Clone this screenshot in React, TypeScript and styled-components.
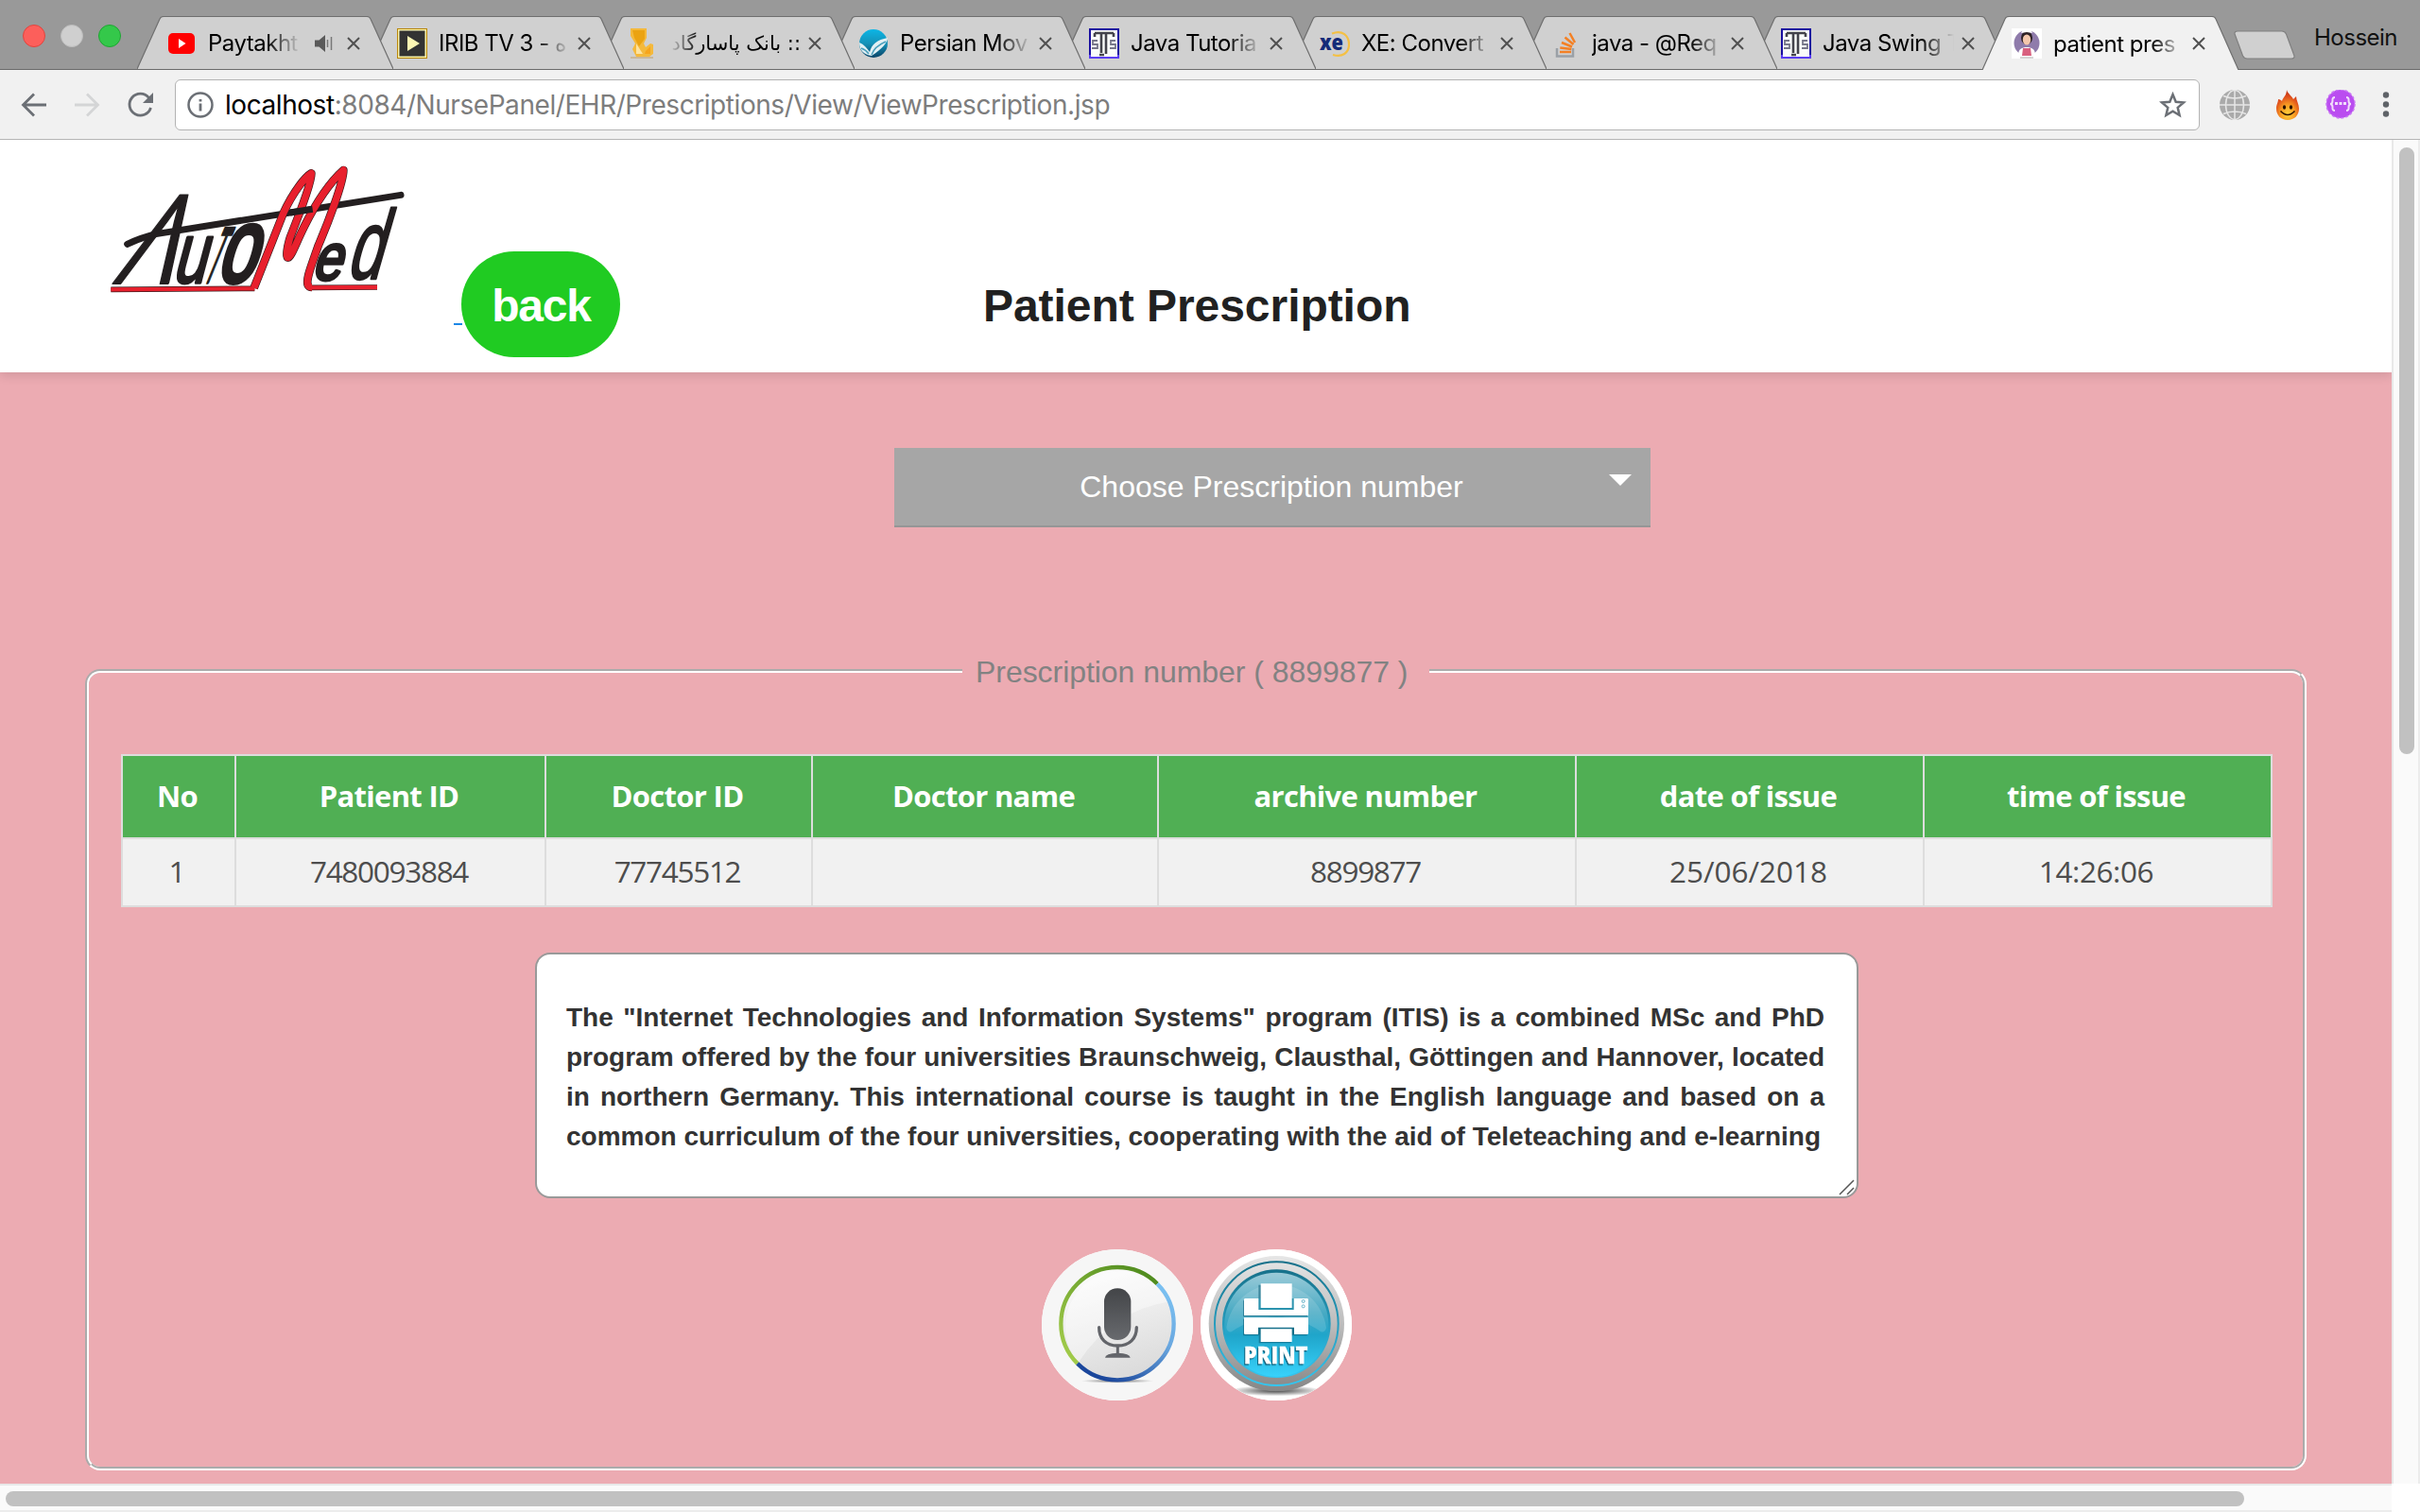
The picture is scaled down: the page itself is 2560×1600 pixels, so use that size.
import React from "react";
import styled, { createGlobalStyle, css } from "styled-components";

const sans = `"Liberation Sans", Arial, sans-serif`;
const ui = `Inter, Roboto, sans-serif`;

const GlobalStyle = createGlobalStyle`
  * { box-sizing: border-box; }
  body { margin: 0; background: #fff; overflow: hidden; }
`;

const Window = styled.div`
  width: 2560px;
  height: 1600px;
  display: flex;
  flex-direction: column;
  overflow: hidden;
`;

/* ---------- browser chrome ---------- */

const TabStrip = styled.div`
  height: 74px;
  display: flex;
  align-items: flex-end;
  background: #999;
  border-bottom: 1px solid #6a6a6a;
  flex: none;
`;

const Lights = styled.div`
  width: 145px;
  align-self: flex-start;
  padding: 26px 0 0 24px;
  display: flex;
  gap: 16px;
`;

const Light = styled.span<{ $color: string; $edge: string }>`
  width: 24px;
  height: 24px;
  border-radius: 50%;
  background: ${(p) => p.$color};
  border: 1px solid ${(p) => p.$edge};
`;

const Tab = styled.div<{ $order: number; $active?: boolean }>`
  position: relative;
  z-index: ${(p) => p.$order};
  width: 271px;
  height: ${(p) => (p.$active ? 57 : 56)}px;
  margin-right: -27px;
  margin-bottom: ${(p) => (p.$active ? -1 : 0)}px;
  padding: 1px 33px 0 31px;
  display: flex;
  align-items: center;
  flex: none;
`;

const TabShape = styled.svg`
  position: absolute;
  inset: 0;
  z-index: -1;
`;

const Favicon = styled.svg`
  width: 32px;
  height: 32px;
  margin-right: 12px;
  flex: none;
`;

const TabTitle = styled.span<{ $rtl?: boolean }>`
  flex: 1;
  min-width: 0;
  padding-top: 1px;
  overflow: hidden;
  white-space: nowrap;
  color: #000;
  font: 24px/40px ${ui};
  letter-spacing: -0.5px;
  mask-image: linear-gradient(to right, #000 calc(100% - 36px), transparent);
  ${(p) =>
    p.$rtl &&
    css`
      direction: rtl;
      font: 21px/40px "DejaVu Sans", sans-serif;
      letter-spacing: 0;
      mask-image: linear-gradient(to left, #000 calc(100% - 32px), transparent);
    `}
`;

const TabGlyph = styled.svg`
  width: 19px;
  height: 20px;
  margin: 0 7px 0 15px;
  flex: none;
`;

const CloseGlyph = styled.svg`
  width: 14px;
  height: 14px;
  margin-left: 8px;
  margin-right: 2px;
  flex: none;
`;

const NewTab = styled.svg`
  width: 68px;
  height: 33px;
  margin: 0 0 9px 20px;
  flex: none;
`;

const Profile = styled.span`
  margin-left: 19px;
  height: 73px;
  padding-top: 20px;
  font: 24px/40px ${ui};
  letter-spacing: -0.5px;
  color: #111;
`;

const Toolbar = styled.div`
  height: 74px;
  flex: none;
  display: flex;
  align-items: center;
  background: #f1f1f1;
  border-bottom: 1px solid #b5b5b5;
`;

const NavIcons = styled.div`
  width: 185px;
  padding-left: 22px;
  display: flex;
  gap: 28px;
`;

const NavIcon = styled.svg`
  width: 28px;
  height: 28px;
`;

const AddressBar = styled.div`
  width: 2142px;
  height: 54px;
  padding: 0 13px 0 12px;
  display: flex;
  align-items: center;
  background: #fff;
  border: 1.5px solid #b3b3b3;
  border-radius: 6px;
`;

const Url = styled.span`
  flex: 1;
  margin-left: 12px;
  padding-top: 1px;
  font: 28px/40px ${ui};
  letter-spacing: -0.44px;
  color: #7d7d7d;
`;

const Host = styled.span`
  color: #000;
`;

const Extensions = styled.div`
  display: flex;
  align-items: center;
  gap: 27px;
  padding-left: 21px;
`;

/* ---------- page ---------- */

const Viewport = styled.div`
  flex: 1;
  min-height: 0;
  display: grid;
  grid-template-columns: 2530px 30px;
  grid-template-rows: 1422px 30px;
`;

const Page = styled.div`
  background: #ecabb2;
  overflow: hidden;
`;

const Header = styled.header`
  height: 246px;
  padding-left: 100px;
  display: flex;
  align-items: flex-start;
  background: #fff;
  box-shadow: 0 4px 10px rgba(0, 0, 0, 0.11);
`;

const Logo = styled.svg`
  width: 340px;
  height: 170px;
  margin-top: 12px;
`;

const BackLink = styled.div`
  margin: 118px 0 0 40px;
  display: flex;
  align-items: flex-start;
`;

const LinkTail = styled.span`
  width: 9px;
  height: 2px;
  margin-top: 76px;
  background: #1b87e6;
`;

const BackButton = styled.button`
  width: 168px;
  height: 112px;
  margin-left: -1px;
  padding: 3px 0 0 1px;
  border: 0;
  border-radius: 56px;
  background: #20cb22;
  color: #fff;
  font: bold 48px/1 ${sans};
  letter-spacing: -1.2px;
`;

const Title = styled.h1`
  margin: 146px 0 0 384px;
  font: bold 48px/60px ${sans};
  letter-spacing: -0.05px;
  color: #212121;
`;

const Select = styled.div`
  width: 800px;
  height: 84px;
  margin: 80px 0 0 946px;
  padding-left: 58px;
  padding-right: 20px;
  display: flex;
  align-items: center;
  background: #a6a6a6;
  border-bottom: 2px solid #969696;
  color: #fff;
  font: 32px/40px ${sans};
`;

const SelectLabel = styled.span`
  flex: 1;
  padding-right: 16px;
  text-align: center;
`;

const Caret = styled.span`
  border: 12px solid transparent;
  border-top-color: #fff;
  border-bottom: 0;
  margin-bottom: 14px;
`;

const Panel = styled.fieldset`
  width: 2350px;
  height: 867px;
  margin: 131px 0 0 90px;
  padding: 67px 32px 0 34px;
  border: 4px groove #fff;
  border-radius: 16px;
`;

const Legend = styled.legend`
  width: 494px;
  margin-left: 890px;
  padding: 2px 0 0 14px;
  font: 32px/40px ${sans};
  letter-spacing: -0.05px;
  color: #828282;
  white-space: nowrap;
`;

const Table = styled.div`
  width: 2276px;
  display: grid;
  grid-template-columns: 118px 326px 280px 364px 440px 366px 366px;
  grid-template-rows: 86px 70px;
  gap: 2px;
  padding: 2px;
  background: #ddd;
`;

const HeadCell = styled.div`
  display: flex;
  align-items: center;
  justify-content: center;
  padding: 0 3px 2px 0;
  background: #50af54;
  color: #fff;
  font: bold 31px/40px "Open Sans", sans-serif;
  letter-spacing: -0.7px;
`;

const Cell = styled.div<{ $spacing: number }>`
  display: flex;
  align-items: center;
  justify-content: center;
  padding: 0 3px 2px 0;
  background: #f1f1f1;
  color: #4d4d4d;
  font: 31.5px/40px "Open Sans", sans-serif;
  letter-spacing: ${(p) => p.$spacing}px;
`;

const Note = styled.div`
  position: relative;
  width: 1400px;
  height: 260px;
  margin: 48px 0 0 438px;
  padding: 46px 34px 0 31px;
  background: #fff;
  border: 2px solid #999;
  border-radius: 16px;
  font: bold 28px/42px ${sans};
  color: #333;
`;

const NoteLine = styled.div<{ $width?: number }>`
  width: ${(p) => p.$width ?? 1331}px;
  white-space: nowrap;
  text-align: justify;
  text-align-last: justify;
`;

const Grip = styled.svg`
  position: absolute;
  right: 1px;
  bottom: 0;
  width: 18px;
  height: 18px;
`;

const Actions = styled.div`
  margin: 54px 0 0 974px;
  display: flex;
  gap: 8px;
`;

const RoundButton = styled.button`
  width: 160px;
  height: 160px;
  padding: 0;
  border: 0;
  border-radius: 50%;
  overflow: hidden;
  background: #fff;
  display: block;
`;

const VScroll = styled.div`
  background: #fafafa;
  border-left: 2px solid #e8e8e8;
  border-right: 2px solid #ececec;
  padding: 8px 0 0 6px;
`;

const HScroll = styled.div`
  background: #fafafa;
  border-top: 2px solid #e8e8e8;
  border-bottom: 2px solid #ececec;
  padding: 6px 0 0 6px;
`;

const Thumb = styled.div<{ $w: number; $h: number }>`
  width: ${(p) => p.$w}px;
  height: ${(p) => p.$h}px;
  border-radius: 8px;
  background: #c1c1c1;
`;

/* ---------- favicons ---------- */

const YouTube = () => (
  <Favicon viewBox="0 0 32 32">
    <rect x="2" y="5" width="28" height="22" rx="5" fill="#f00" />
    <path d="M13 11v10l7.5-5z" fill="#fff" />
  </Favicon>
);

const Irib = () => (
  <Favicon viewBox="0 0 32 32">
    <rect width="32" height="32" fill="#b8860b" />
    <rect x="1" y="1" width="30" height="30" fill="#fbf3a8" />
    <rect x="2.5" y="2.500" width="27" height="27" fill="#333" />
    <path d="M11 8v16l13-8z" fill="#fdf7b4" />
  </Favicon>
);

const Bank = () => (
  <Favicon viewBox="0 0 32 32">
    <path d="M3 0h17v10l-3 6 2 4 5-4 3 1v10l-4 3H9l-4-8 3-6-5-8z" fill="#f4b93c" />
    <path d="M5 2h13v9l-6 8-5-9z" fill="#eba312" />
    <path d="M9 16l7 11H9z" fill="#fde3a0" />
    <path d="M19 24l5-5v8h-6z" fill="#f7a51c" />
    <path d="M3 30h24v2H3z" fill="#c9b79a" />
  </Favicon>
);

const PersianMovie = () => (
  <Favicon viewBox="0 0 32 32">
    <defs>
      <linearGradient id="pm" x1="0" y1="0" x2="0" y2="1">
        <stop offset="0" stopColor="#0cb6e6" />
        <stop offset="0.5" stopColor="#1592b8" />
        <stop offset="1" stopColor="#0a4468" />
      </linearGradient>
    </defs>
    <circle cx="16" cy="16" r="15" fill="url(#pm)" />
    <path d="M1 15c5 2 8 6 11 10 2-8 8-13 19-15-1 6-5 11-17 19C6 28 1 23 1 15z" fill="#e2f0f4" />
    <path d="M3 21c3 1 6 3 8 6M14 28c2-6 8-11 15-14" stroke="#4a9fbc" strokeWidth="1.500" fill="none" />
  </Favicon>
);

const JavaTips = () => (
  <Favicon viewBox="0 0 32 32">
    <rect width="32" height="32" fill="#5a3df2" />
    <rect width="32" height="28" fill="#1a0fa0" />
    <rect x="2" y="2" width="28" height="28" fill="#fafcfa" />
    <path d="M6 5h20M6 5v4M26 5v4M13 5v21M18 5v22M11 28h5" stroke="#44444c" strokeWidth="2.600" fill="none" />
    <path d="M9 13H4v4h5v4H3M28 13h-5v4h5v4h-6" stroke="#77778a" strokeWidth="1.800" fill="none" />
  </Favicon>
);

const Xe = () => (
  <Favicon viewBox="0 0 32 32">
    <path d="M13 5.500C24 1 31 8 31 17S24 31 14 28" stroke="#f4c044" strokeWidth="2.200" fill="none" />
    <text x="0" y="23" fontFamily="Open Sans, sans-serif" fontWeight="800" fontSize="22" textLength="25" lengthAdjust="spacingAndGlyphs" fill="#142a78">
      xe
    </text>
  </Favicon>
);

const StackOverflow = () => (
  <Favicon viewBox="0 0 32 32">
    <path d="M7 21v8.500h17V21" stroke="#9aa0a6" strokeWidth="2.500" fill="none" />
    <path d="M10 25h12M10.300 20.500l12 1.500M12 15l11 4.500M15.500 9.500l9 7.500M20.500 5l5.500 10" stroke="#f48024" strokeWidth="2.500" />
  </Favicon>
);

const Nurse = () => (
  <Favicon viewBox="0 0 32 32">
    <rect width="32" height="32" fill="#fff" />
    <circle cx="16" cy="15.500" r="13.500" fill="#8f7bab" />
    <path d="M7 28c0-6 4-8 9-8s9 2 9 8l-4 2H11z" fill="#fff" />
    <path d="M12 21h8l1 8H11z" fill="#d9607f" />
    <ellipse cx="16" cy="10" rx="6" ry="7" fill="#2e2226" />
    <ellipse cx="16" cy="12" rx="4.200" ry="5.500" fill="#f4c7ac" />
    <path d="M10 5l2-4h8l2 4-6-1z" fill="#fff" />
    <path d="M9 31h14" stroke="#aaa" strokeWidth="1" />
  </Favicon>
);

const Close = () => (
  <CloseGlyph viewBox="0 0 14 14">
    <path d="M1 1l12 12M13 1L1 13" stroke="#505050" strokeWidth="2" />
  </CloseGlyph>
);

const Speaker = () => (
  <TabGlyph viewBox="0 0 19 20">
    <path d="M0 6.500h4.500L11 1v18L4.500 13.500H0z" fill="#5a5a5a" />
    <path d="M13.500 6v8M17.500 3v14" stroke="#777" strokeWidth="1.500" />
  </TabGlyph>
);

interface TabInfo {
  title: string;
  Icon: () => React.ReactElement;
  audio?: boolean;
  rtl?: boolean;
  active?: boolean;
}

const tabs: TabInfo[] = [
  { title: "Paytakht", Icon: YouTube, audio: true },
  { title: "IRIB TV 3 - ه", Icon: Irib },
  { title: ":: بانک پاسارگاد", Icon: Bank, rtl: true },
  { title: "Persian Mov", Icon: PersianMovie },
  { title: "Java Tutoria", Icon: JavaTips },
  { title: "XE: Convert", Icon: Xe },
  { title: "java - @Req", Icon: StackOverflow },
  { title: "Java Swing T", Icon: JavaTips },
  { title: "patient pres", Icon: Nurse, active: true },
];

const BrowserTab = ({ tab, order }: { tab: TabInfo; order: number }) => (
  <Tab $order={order} $active={tab.active}>
    <TabShape width="271" height={tab.active ? 57 : 56} viewBox={`0 0 271 ${tab.active ? 57 : 56}`}>
      <path
        d={tab.active ? "M0 57L24 3Q25 .5 28 .5H243Q246 .5 247 3L271 57" : "M0 56L24 3Q25 .5 28 .5H243Q246 .5 247 3L271 56"}
        fill={tab.active ? "#f1f1f1" : "#d0d0d0"}
        stroke="#6f6f6f"
        strokeWidth="1.200"
      />
    </TabShape>
    <tab.Icon />
    <TabTitle $rtl={tab.rtl}>{tab.title}</TabTitle>
    {tab.audio && <Speaker />}
    <Close />
  </Tab>
);

/* ---------- toolbar icons ---------- */

const Globe = () => (
  <svg width="32" height="32" viewBox="0 0 32 32">
    <circle cx="16" cy="16" r="16" fill="#aaa" />
    <g stroke="#e6e6e6" strokeWidth="1.500" fill="none">
      <path d="M16 0v32M0 16h32M4 6.500q12 5 24 0M4 25.500q12-5 24 0" />
      <ellipse cx="16" cy="16" rx="9.500" ry="15.500" />
    </g>
  </svg>
);

const Flame = () => (
  <svg width="26" height="32" viewBox="0 0 26 32">
    <defs>
      <radialGradient id="fl" cx="0.5" cy="0.8" r="0.7">
        <stop offset="0" stopColor="#ffd23c" />
        <stop offset="0.45" stopColor="#f79a22" />
        <stop offset="0.8" stopColor="#e0501c" />
        <stop offset="1" stopColor="#c93a18" />
      </radialGradient>
    </defs>
    <path d="M12 0c1 4 5 6 7 10l3-3c0 4 3 8 3 13 0 7-5 12-12 12S1 27 1 20c0-5 2-6 2-10 2 0 3 1 4 2C8 8 12 6 12 0z" fill="url(#fl)" />
    <ellipse cx="9.500" cy="18.500" rx="1.600" ry="2.200" fill="#2b1200" />
    <ellipse cx="16.500" cy="18.500" rx="1.600" ry="2.200" fill="#2b1200" />
    <path d="M5.500 22.500q7.500 8 15 0" stroke="#2b1200" strokeWidth="1.600" fill="none" />
  </svg>
);

const PurpleBadge = () => (
  <svg width="32" height="32" viewBox="0 0 32 32">
    <circle cx="16" cy="15" r="15" fill="#ba4df0" />
    <circle cx="16" cy="15" r="15" fill="none" stroke="#c977f4" strokeWidth="1.500" strokeDasharray="3 2" />
    <path d="M10 8q-3 0-2.500 3.500Q7.500 15 5 15q2.500 0 2.500 3.500Q7 22 10 22M22 8q3 0 2.500 3.500Q24.500 15 27 15q-2.500 0-2.500 3.500Q25 22 22 22" stroke="#f1ddfb" strokeWidth="2" fill="none" />
    <path d="M10 14.500h3M14.500 14.500h3M19 14.500h3" stroke="#f1ddfb" strokeWidth="3" />
  </svg>
);

const Menu = () => (
  <svg width="10" height="32" viewBox="0 0 10 32" fill="#5f6368">
    <circle cx="5" cy="5.500" r="3.200" />
    <circle cx="5" cy="15.500" r="3.200" />
    <circle cx="5" cy="25.500" r="3.200" />
  </svg>
);

/* ---------- page drawings ---------- */

interface LetterProps {
  ch: string;
  x: number;
  y: number;
  size: number;
  sx: number;
  skew: number;
  weight: number;
}

const Letter = ({ ch, x, y, size, sx, skew, weight }: LetterProps) => (
  <text
    transform={`translate(${x} ${y}) skewX(${-skew}) scale(${sx} 1)`}
    fontFamily="Liberation Sans, sans-serif"
    fontSize={size}
    fill="#231f20"
    stroke="#231f20"
    strokeWidth={weight}
    strokeLinejoin="round"
  >
    {ch}
  </text>
);

const peaks =
  "M506 434L600 195C630 130 668 82 688 70C690 95 650 200 622 270C610 305 607 338 614 338C625 335 640 290 665 240C700 170 745 100 790 60C790 100 740 230 710 300C688 365 670 405 677 425Q680 432 690 432";
const baseline = "M52 439L508 436M684 433L897 432";

const AutoMedLogo = () => (
  <Logo viewBox="0 0 1020 510" role="img" aria-label="AutoMed">
    <Letter ch="Λ" x={56} y={421} size={408} sx={0.66} skew={26} weight={6} />
    <Letter ch="u" x={244} y={416} size={272} sx={0.7} skew={15} weight={10} />
    <Letter ch="T" x={341} y={418} size={250} sx={0.24} skew={22} weight={11} />
    <Letter ch="o" x={384} y={413} size={330} sx={0.66} skew={17} weight={18} />
    <Letter ch="e" x={688} y={408} size={208} sx={0.8} skew={16} weight={11} />
    <Letter ch="d" x={796} y={406} size={312} sx={0.64} skew={16} weight={7} />
    <g fill="none" strokeLinejoin="round">
      <path d="M104 295Q145 275 195 263L972 139" stroke="#231f20" strokeWidth="21" strokeLinecap="round" />
      <path d={peaks} stroke="#3a1a1c" strokeWidth="26" />
      <path d={baseline} stroke="#3a1a1c" strokeWidth="17" />
      <path d={peaks} stroke="#e8202d" strokeWidth="22" />
      <path d={baseline} stroke="#e8202d" strokeWidth="13" />
      <path d="M621 195L692 184" stroke="#231f20" strokeWidth="21" />
    </g>
  </Logo>
);

const MicArt = () => (
  <svg width="160" height="160" viewBox="66 66 480 480">
    <defs>
      <linearGradient id="disc" x1="0.3" y1="0" x2="0.6" y2="1">
        <stop offset="0" stopColor="#fcfcfc" />
        <stop offset="1" stopColor="#dadada" />
      </linearGradient>
      <linearGradient id="green" x1="0" y1="1" x2="1" y2="0">
        <stop offset="0" stopColor="#a8d04e" />
        <stop offset="1" stopColor="#48861a" />
      </linearGradient>
      <linearGradient id="blue" x1="0.9" y1="0" x2="0.3" y2="1">
        <stop offset="0" stopColor="#7cc2f2" />
        <stop offset="0.45" stopColor="#6aa8e0" />
        <stop offset="1" stopColor="#1b479c" />
      </linearGradient>
      <linearGradient id="body" x1="0" y1="0" x2="0" y2="1">
        <stop offset="0" stopColor="#434548" />
        <stop offset="1" stopColor="#686a6e" />
      </linearGradient>
      <radialGradient id="shade">
        <stop offset="0" stopColor="#777" />
        <stop offset="1" stopColor="#f6f6f6" />
      </radialGradient>
    </defs>
    <rect x="66" y="66" width="480" height="480" fill="#f6f6f6" />
    <ellipse cx="306" cy="484" rx="115" ry="7" fill="url(#shade)" />
    <circle cx="306" cy="302" r="176" fill="url(#disc)" />
    <path d="M182 426Q290 260 473 232A176 176 0 1 0 182 426" fill="#fff" opacity="0.4" />
    <path d="M179.400 428.600A179 179 0 0 1 432.600 175.400" stroke="url(#green)" strokeWidth="13" fill="none" />
    <path d="M432.600 175.400A179 179 0 0 1 179.400 428.600" stroke="url(#blue)" strokeWidth="13" fill="none" />
    <rect x="264" y="190" width="85" height="164" rx="42" fill="url(#body)" />
    <path d="M248 314C248 350 270 372 307 372S367 350 367 314" stroke="#63656a" strokeWidth="10" strokeLinecap="round" fill="none" />
    <path d="M307 372V400" stroke="#63656a" strokeWidth="9" />
    <path d="M267 410Q268 396 307 395Q346 396 347 410z" fill="#63656a" />
  </svg>
);

const PrintArt = () => (
  <svg width="160" height="160" viewBox="570 66 480 480">
    <defs>
      <linearGradient id="steel" x1="0" y1="0" x2="0" y2="1">
        <stop offset="0" stopColor="#e6e6e6" />
        <stop offset="0.5" stopColor="#bdbdbd" />
        <stop offset="1" stopColor="#868686" />
      </linearGradient>
      <linearGradient id="teal" x1="0" y1="0" x2="0" y2="1">
        <stop offset="0" stopColor="#17718a" />
        <stop offset="1" stopColor="#33c6f0" />
      </linearGradient>
      <linearGradient id="glass" x1="0" y1="0" x2="0" y2="1">
        <stop offset="0" stopColor="#9ccbd8" />
        <stop offset="0.4" stopColor="#45a9c3" />
        <stop offset="0.6" stopColor="#1fa5ca" />
        <stop offset="1" stopColor="#38d2fb" />
      </linearGradient>
      <radialGradient id="floor">
        <stop offset="0" stopColor="#444" />
        <stop offset="1" stopColor="#fff" />
      </radialGradient>
    </defs>
    <rect x="570" y="66" width="480" height="480" fill="#fff" />
    <ellipse cx="810" cy="515" rx="150" ry="17" fill="url(#floor)" />
    <circle cx="811" cy="302" r="215" fill="url(#steel)" />
    <circle cx="811" cy="302" r="196" fill="none" stroke="url(#teal)" strokeWidth="6" />
    <circle cx="811" cy="302" r="172" fill="url(#teal)" />
    <circle cx="811" cy="305" r="165" fill="url(#glass)" />
    <path d="M652 315Q655 330 668 328Q740 280 811 280T952 328Q966 330 969 315A160 160 0 0 0 652 315" fill="#fff" opacity="0.14" />
    <g fill="#0d5f7a" opacity="0.6" transform="translate(-3 4)">
      <path d="M757 175h103v80H757zM712 222h200v54H708v-50zM708 283h204v49q0 4-4 4H708zM758 318h102v42H758z" />
    </g>
    <path d="M712 222h196q4 0 4 4v50H708v-50q0-4 4-4zM708 283h204v49q0 4-4 4H712q-4 0-4-4z" fill="#fff" />
    <path d="M754 222h112v36H754z" fill="#2b93ae" />
    <path d="M761 175h99v77h-99z" fill="#fff" />
    <path d="M753 314h114v22H753z" fill="#16708a" />
    <path d="M761 319h99v41h-99z" fill="#fff" />
    <circle cx="896" cy="231" r="4.500" fill="none" stroke="#4aa6bf" strokeWidth="2.500" />
    <circle cx="896" cy="247" r="4.500" fill="none" stroke="#4aa6bf" strokeWidth="2.500" />
    <text
      x="707"
      y="428"
      textLength="204"
      lengthAdjust="spacingAndGlyphs"
      fontFamily="Open Sans, sans-serif"
      fontWeight="800"
      fontSize="72"
      fill="#fff"
      stroke="#fff"
      strokeWidth="1"
      filter="drop-shadow(-3px 4px 1px #0d5f7a)"
    >
      PRINT
    </text>
  </svg>
);

const columns = [
  { head: "No", value: "1", spacing: 0 },
  { head: "Patient ID", value: "7480093884", spacing: -1.3 },
  { head: "Doctor ID", value: "77745512", spacing: -1.3 },
  { head: "Doctor name", value: "", spacing: 0 },
  { head: "archive number", value: "8899877", spacing: -1.3 },
  { head: "date of issue", value: "25/06/2018", spacing: 0 },
  { head: "time of issue", value: "14:26:06", spacing: -0.4 },
];

const noteLines = [
  'The "Internet Technologies and Information Systems" program (ITIS) is a combined MSc and PhD',
  "program offered by the four universities Braunschweig, Clausthal, Göttingen and Hannover, located",
  "in northern Germany. This international course is taught in the English language and based on a",
  "common curriculum of the four universities, cooperating with the aid of Teleteaching and e-learning",
];

export default function App() {
  return (
    <Window>
      <GlobalStyle />
      <TabStrip>
        <Lights>
          <Light $color="#fc5f5b" $edge="#e0443e" />
          <Light $color="#cfcfcf" $edge="#bdbdbd" />
          <Light $color="#34c84a" $edge="#1fa533" />
        </Lights>
        {tabs.map((tab, i) => (
          <BrowserTab key={i} tab={tab} order={tab.active ? 20 : 10 - i} />
        ))}
        <NewTab viewBox="0 0 68 33">
          <path d="M6 2H53Q56 2 57.500 5L66 28Q66.500 31 63 31H16Q13 31 11.500 28L3 5Q2.500 2 6 2z" fill="#d0d0d0" stroke="#808080" strokeWidth="1.200" />
        </NewTab>
        <Profile>Hossein</Profile>
      </TabStrip>
      <Toolbar>
        <NavIcons>
          <NavIcon viewBox="0 0 28 28" fill="none" stroke="#6b6f75" strokeWidth="2.800">
            <path d="M27 14H3M14 2.500L2.500 14L14 25.500" />
          </NavIcon>
          <NavIcon viewBox="0 0 28 28" fill="none" stroke="#d4d5d6" strokeWidth="2.800">
            <path d="M1 14H25M14 2.500L25.500 14L14 25.500" />
          </NavIcon>
          <NavIcon viewBox="0 0 28 28" fill="none" stroke="#6b6f75" strokeWidth="2.800">
            <path d="M23.500 6.500A11.500 11.500 0 1 0 25.500 17" />
            <path d="M28 1v11H17z" fill="#6b6f75" stroke="none" />
          </NavIcon>
        </NavIcons>
        <AddressBar>
          <svg width="28" height="28" viewBox="0 0 28 28" fill="none" stroke="#6b6f75" strokeWidth="2.500">
            <circle cx="14" cy="14" r="12.500" />
            <path d="M14 12.500V20.500M14 8V10.500" strokeWidth="2.800" />
          </svg>
          <Url>
            <Host>localhost</Host>:8084/NursePanel/EHR/Prescriptions/View/ViewPrescription.jsp
          </Url>
          <svg width="29" height="28" viewBox="0 0 29 28" fill="none" stroke="#6b6f75" strokeWidth="2.500">
            <path d="M14.500 3L17.700 10.700L26 11.400L19.700 16.900L21.600 25L14.500 20.700L7.400 25L9.300 16.900L3 11.400L11.300 10.700z" />
          </svg>
        </AddressBar>
        <Extensions>
          <Globe />
          <Flame />
          <PurpleBadge />
          <Menu />
        </Extensions>
      </Toolbar>
      <Viewport>
        <Page>
          <Header>
            <AutoMedLogo />
            <BackLink>
              <LinkTail />
              <BackButton>back</BackButton>
            </BackLink>
            <Title>Patient Prescription</Title>
          </Header>
          <Select>
            <SelectLabel>Choose Prescription number</SelectLabel>
            <Caret />
          </Select>
          <Panel>
            <Legend>Prescription number ( 8899877 )</Legend>
            <Table>
              {columns.map((c) => (
                <HeadCell key={c.head}>{c.head}</HeadCell>
              ))}
              {columns.map((c) => (
                <Cell key={c.head} $spacing={c.spacing}>
                  {c.value}
                </Cell>
              ))}
            </Table>
            <Note>
              {noteLines.map((line, i) => (
                <NoteLine key={i} $width={i === 3 ? 1327 : undefined}>
                  {line}
                </NoteLine>
              ))}
              <Grip viewBox="0 0 18 18" stroke="#555" strokeWidth="1.500">
                <path d="M1 16L16 1M9 16L16 9" />
              </Grip>
            </Note>
            <Actions>
              <RoundButton aria-label="Record">
                <MicArt />
              </RoundButton>
              <RoundButton aria-label="Print">
                <PrintArt />
              </RoundButton>
            </Actions>
          </Panel>
        </Page>
        <VScroll>
          <Thumb $w={16} $h={642} />
        </VScroll>
        <HScroll>
          <Thumb $w={2368} $h={16} />
        </HScroll>
      </Viewport>
    </Window>
  );
}
